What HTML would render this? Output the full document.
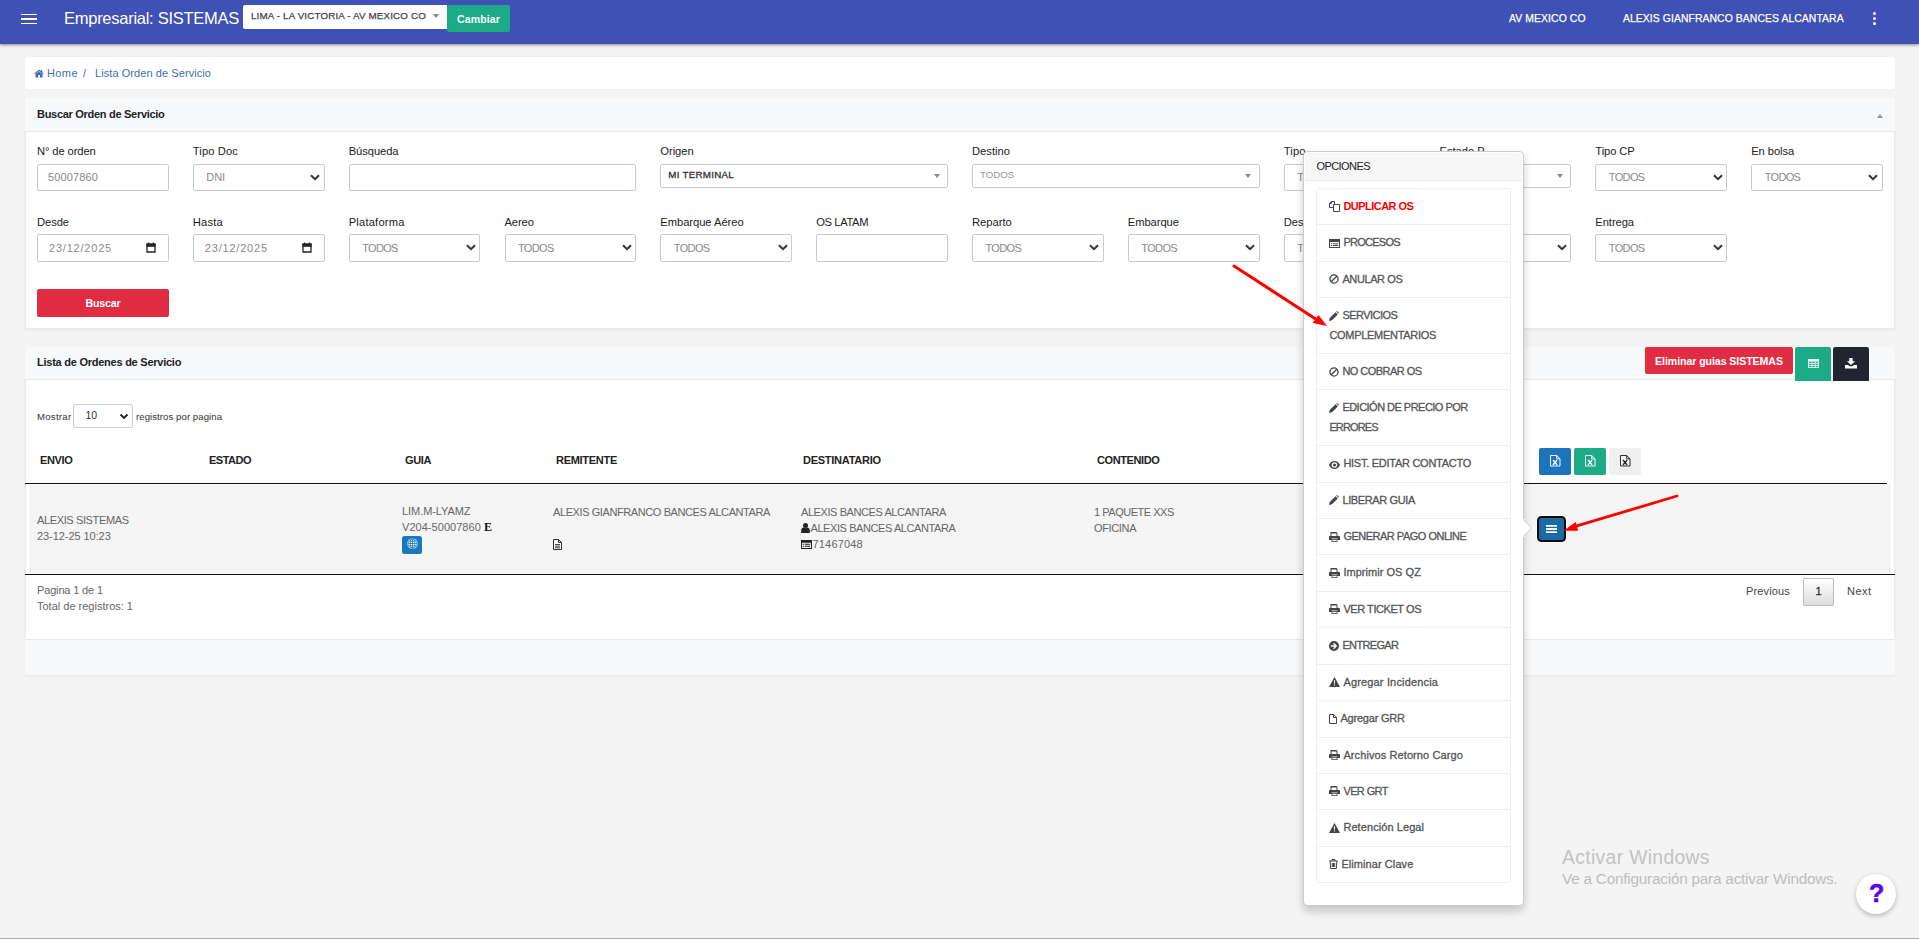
<!DOCTYPE html>
<html lang="es">
<head>
<meta charset="utf-8">
<title><span style="letter-spacing:0.075px">Lista Orden de Servicio</span></title>
<style>
*{box-sizing:border-box;margin:0;padding:0}
html,body{width:1919px;height:939px;overflow:hidden}
body{position:relative;background:#f4f4f4;font-family:"Liberation Sans",sans-serif;font-size:11px;color:#555;}
.abs{position:absolute}
/* NAVBAR */
.nav{position:absolute;left:0;top:0;width:1919px;height:43.5px;background:#3f51b5;box-shadow:0 1px 3px rgba(0,0,0,.45);z-index:5}
.burger{position:absolute;left:21px;top:14px;width:15px;height:10px}
.burger i{position:absolute;left:0;width:15.500px;height:1.200px;background:#fff}
.brand{position:absolute;left:64px;top:7px;font-size:16.5px;line-height:22px;color:#fff;white-space:nowrap}
.navsel{position:absolute;left:243px;top:5px;width:204px;height:24px;background:#fff;border-radius:2px 0 0 2px;font-size:9.8px;line-height:21px;color:#444;-webkit-text-stroke:.25px #444;padding-left:8px;white-space:nowrap}
.navsel b{position:absolute;right:8px;top:9px;border:3px solid transparent;border-top:4px solid #888;border-bottom:0;width:0;height:0}
.cambiar{position:absolute;left:447px;top:5px;width:63px;height:27px;background:#1cab86;border-radius:2px;color:#fff;font-weight:bold;font-size:10.5px;line-height:29px;text-align:center}
.navtxt{position:absolute;top:12px;font-size:10.4px;line-height:14px;color:#fff;white-space:nowrap;-webkit-text-stroke:.25px #fff}
.dots{position:absolute;left:1873px;top:12px;width:4px}
.dots i{display:block;width:3px;height:3px;border-radius:50%;background:#fff;margin-bottom:2px}
/* CARDS */
.crumb{position:absolute;left:25px;top:57px;width:1870px;height:32px;background:#fff;border-radius:3px;box-shadow:0 0 1px rgba(0,0,0,.12);font-size:11px;line-height:32px;color:#3d6fb0;white-space:nowrap}
.card{position:absolute;left:25px;width:1870px;background:#fff;outline:1px solid #e7ebf0;outline-offset:-1px;box-shadow:0 1px 2px rgba(0,0,0,.06)}
.card .hd{position:absolute;left:0;top:0;width:100%;background:#f8f9fb;border-bottom:1px solid #e6eaee;font-weight:bold;color:#222;font-size:11px}
.card .hd>span{position:absolute;left:12px;white-space:nowrap}
/* FORM */
.lbl{position:absolute;font-size:11.2px;line-height:14px;color:#222;white-space:nowrap}
.inp{position:absolute;width:131.83px;height:27px;background:#fff;border:1px solid #c3cbd6;border-radius:2px;font-size:11px;color:#8a8a8a;line-height:25px;padding-left:10px;white-space:nowrap}
.inp.r2{height:28px;line-height:26px}
.inp.r2 .chev{top:9px}
.sel{padding-left:12.500px}
.chev{position:absolute;right:3.500px;top:8.500px;width:10px;height:7px}
.s2{position:absolute;width:287.67px;height:24px;background:#fff;border:1px solid #c3cbd6;border-radius:2px;font-size:9.8px;line-height:20px;padding-left:7px;color:#999;white-space:nowrap}
.s2 b{position:absolute;right:7.300px;top:9.300px;border:3.200px solid transparent;border-top:4.400px solid #888;border-bottom:0;width:0;height:0}
.btn-buscar{position:absolute;left:12px;top:191px;width:131.83px;height:28px;background:#e02d44;border-radius:2px;color:#fff;font-weight:bold;font-size:10.6px;line-height:28px;text-align:center}

.date{padding-left:11px}
.cal{position:absolute;right:12px;top:7px;width:10px;height:11px}
/* LIST */
.btn{position:absolute;border-radius:2px;color:#fff;text-align:center;font-weight:bold;white-space:nowrap}
.tiny{font-size:9.6px;color:#333;white-space:nowrap;position:absolute;line-height:12px}
.th{position:absolute;top:107px;font-weight:bold;font-size:11px;line-height:13px;color:#222;white-space:nowrap}
.td{position:absolute;font-size:11px;line-height:16px;color:#666;white-space:nowrap}
.hline{position:absolute;left:0;height:1px;background:#111}
.pg{position:absolute;font-size:11px;line-height:14px;color:#444;white-space:nowrap}

/* POPOVER */
.pop{position:absolute;left:1303px;top:151px;width:221px;height:755px;background:#fff;border:1px solid rgba(0,0,0,.2);border-radius:5px;box-shadow:0 5px 10px rgba(0,0,0,.2);z-index:10}
.pop h3{margin:1px 1px 0 1px;height:28px;background:#f7f7f7;border-bottom:1px solid #ebebeb;border-radius:4px 4px 0 0;font-size:11px;font-weight:normal;line-height:27px;padding-left:11.500px;color:#222}
.lg{position:absolute;left:12.400px;top:36px;width:195px;border:1px solid #efefef;border-radius:3px}
.li{display:block;padding:8px 12px 8px 12px;line-height:19.400px;border-top:1px solid #eee;font-size:11px;color:#555;-webkit-text-stroke:.3px #555;width:193px}
.li:first-child{border-top:0}
.li svg{display:inline-block;vertical-align:-1.5px;margin-right:3px}
.poparrow{position:absolute;left:1523.300px;top:519px;width:9px;height:18px;z-index:11}
.wm{position:absolute;left:1562px;font-family:"Liberation Sans",sans-serif;color:#bdbdbd;white-space:nowrap}
.help{position:absolute;left:1856px;top:874px;width:40px;height:40px;padding-left:1.500px;border-radius:50%;background:#fff;box-shadow:0 2px 5px rgba(0,0,0,.25);color:#6200ee;font-weight:bold;font-size:25px;line-height:38px;text-align:center;-webkit-text-stroke:.6px #6200ee}
.bottomline{position:absolute;left:0;top:937px;width:1919px;height:2px;background:linear-gradient(#f8f8f8 50%,#a8adba 50%)}
.arrows{position:absolute;left:0;top:0;z-index:20;pointer-events:none}
.s2{letter-spacing:-0.118px}
.sel{letter-spacing:-0.655px}
</style>
</head>
<body>

<header class="nav">
  <div class="burger"><i style="top:0"></i><i style="top:4.4px"></i><i style="top:8.8px"></i></div>
  <div class="brand"><span style="letter-spacing:-0.267px">Empresarial: SISTEMAS</span></div>
  <div class="navsel"><span style="letter-spacing:0.149px">LIMA - LA VICTORIA - AV MEXICO CO</span><b></b></div>
  <div class="cambiar"><span style="letter-spacing:0.164px">Cambiar</span></div>
  <div class="navtxt" style="left:1509px"><span style="letter-spacing:0.095px">AV MEXICO CO</span></div>
  <div class="navtxt" style="left:1623px"><span style="letter-spacing:0.076px">ALEXIS GIANFRANCO BANCES ALCANTARA</span></div>
  <div class="dots"><i></i><i></i><i></i></div>
</header>

<nav class="crumb">
  <span class="abs" style="left:9px">
    <svg width="10" height="9" viewBox="0 0 20 18" style="vertical-align:-1px"><path fill="#3d6fb0" d="M10 1 L0.5 9 L2 10.5 L10 3.8 L18 10.5 L19.5 9 L16.5 6.4 V2 H14 V4.3 Z M3 10.6 V17 H8.2 V12 H11.8 V17 H17 V10.6 L10 4.8 Z"/></svg><span style="margin-left:3px"><span style="letter-spacing:0.385px">Home</span></span></span>
  <span class="abs" style="left:58px">/</span>
  <span class="abs" style="left:70px"><span style="letter-spacing:0.075px">Lista Orden de Servicio</span></span>
</nav>

<section class="card" id="search" style="top:98px;height:231px">
  <div class="hd" style="height:34px"><span style="top:9px;line-height:14px"><span style="letter-spacing:-0.291px">Buscar Orden de Servicio</span></span>
    <b class="abs" style="right:12px;top:16px;border:3.5px solid transparent;border-bottom:4px solid #999;border-top:0"></b></div>

  <div id="form">
    <div class="lbl" style="left:12px;top:46px"><span style="letter-spacing:-0.103px">N° de orden</span></div>
    <div class="lbl" style="left:167.83px;top:46px"><span style="letter-spacing:0.092px">Tipo Doc</span></div>
    <div class="lbl" style="left:323.67px;top:46px"><span style="letter-spacing:-0.070px">Búsqueda</span></div>
    <div class="lbl" style="left:635.33px;top:46px"><span style="letter-spacing:-0.059px">Origen</span></div>
    <div class="lbl" style="left:947px;top:46px"><span style="letter-spacing:0.027px">Destino</span></div>
    <div class="lbl" style="left:1258.67px;top:46px"><span style="letter-spacing:0.180px">Tipo</span></div>
    <div class="lbl" style="left:1414.5px;top:46px"><span style="letter-spacing:-0.035px">Estado P.</span></div>
    <div class="lbl" style="left:1570.33px;top:46px"><span style="letter-spacing:-0.100px">Tipo CP</span></div>
    <div class="lbl" style="left:1726.17px;top:46px"><span style="letter-spacing:-0.064px">En bolsa</span></div>

    <div class="inp" style="left:12px;top:66px"><span style="letter-spacing:0.150px">50007860</span></div>
    <div class="inp sel" style="left:167.83px;top:66px"><span style="letter-spacing:-0.127px">DNI</span><svg class="chev" viewBox="0 0 10 7"><path d="M1 1.200 L5 5.200 L9 1.200" fill="none" stroke="#333" stroke-width="2"/></svg></div>
    <div class="inp" style="left:323.67px;top:66px;width:287.67px"></div>
    <div class="s2" style="left:635.33px;top:66px;color:#333;-webkit-text-stroke:.3px #333"><span style="letter-spacing:0.253px">MI TERMINAL</span><b></b></div>
    <div class="s2" style="left:947px;top:66px">TODOS<b></b></div>
    <div class="inp sel" style="left:1258.67px;top:66px">TODOS</div>
    <div class="s2" style="left:1414.5px;top:66px;width:131.83px">TODOS<b></b></div>
    <div class="inp sel" style="left:1570.33px;top:66px">TODOS<svg class="chev" viewBox="0 0 10 7"><path d="M1 1.200 L5 5.200 L9 1.200" fill="none" stroke="#333" stroke-width="2"/></svg></div>
    <div class="inp sel" style="left:1726.17px;top:66px">TODOS<svg class="chev" viewBox="0 0 10 7"><path d="M1 1.200 L5 5.200 L9 1.200" fill="none" stroke="#333" stroke-width="2"/></svg></div>

    <div class="lbl" style="left:12px;top:117px"><span style="letter-spacing:-0.086px">Desde</span></div>
    <div class="lbl" style="left:167.83px;top:117px"><span style="letter-spacing:0.191px">Hasta</span></div>
    <div class="lbl" style="left:323.67px;top:117px"><span style="letter-spacing:0.188px">Plataforma</span></div>
    <div class="lbl" style="left:479.5px;top:117px"><span style="letter-spacing:-0.115px">Aereo</span></div>
    <div class="lbl" style="left:635.33px;top:117px"><span style="letter-spacing:-0.051px">Embarque Aéreo</span></div>
    <div class="lbl" style="left:791.17px;top:117px"><span style="letter-spacing:-0.360px">OS LATAM</span></div>
    <div class="lbl" style="left:947px;top:117px">Reparto</div>
    <div class="lbl" style="left:1102.83px;top:117px"><span style="letter-spacing:-0.075px">Embarque</span></div>
    <div class="lbl" style="left:1258.67px;top:117px"><span style="letter-spacing:-0.013px">Despacho</span></div>
    <div class="lbl" style="left:1414.5px;top:117px">Estado</div>
    <div class="lbl" style="left:1570.33px;top:117px"><span style="letter-spacing:-0.081px">Entrega</span></div>

    <div class="inp r2 date" style="left:12px;top:136px"><span style="letter-spacing:0.793px">23/12/2025</span><svg class="cal" viewBox="0 0 10 11"><path d="M1 2.2 H9 V10 H1 Z" fill="none" stroke="#222" stroke-width="1.3"/><path d="M1 2 H9 V4.2 H1 Z M2.6 0.4 V2 M7.4 0.4 V2" stroke="#222" stroke-width="1.2" fill="#222"/></svg></div>
    <div class="inp r2 date" style="left:167.83px;top:136px"><span style="letter-spacing:0.793px">23/12/2025</span><svg class="cal" viewBox="0 0 10 11"><path d="M1 2.2 H9 V10 H1 Z" fill="none" stroke="#222" stroke-width="1.3"/><path d="M1 2 H9 V4.2 H1 Z M2.6 0.4 V2 M7.4 0.4 V2" stroke="#222" stroke-width="1.2" fill="#222"/></svg></div>
    <div class="inp r2 sel" style="left:323.67px;top:136px">TODOS<svg class="chev" viewBox="0 0 10 7"><path d="M1 1.200 L5 5.200 L9 1.200" fill="none" stroke="#333" stroke-width="2"/></svg></div>
    <div class="inp r2 sel" style="left:479.5px;top:136px">TODOS<svg class="chev" viewBox="0 0 10 7"><path d="M1 1.200 L5 5.200 L9 1.200" fill="none" stroke="#333" stroke-width="2"/></svg></div>
    <div class="inp r2 sel" style="left:635.33px;top:136px">TODOS<svg class="chev" viewBox="0 0 10 7"><path d="M1 1.200 L5 5.200 L9 1.200" fill="none" stroke="#333" stroke-width="2"/></svg></div>
    <div class="inp r2" style="left:791.17px;top:136px"></div>
    <div class="inp r2 sel" style="left:947px;top:136px">TODOS<svg class="chev" viewBox="0 0 10 7"><path d="M1 1.200 L5 5.200 L9 1.200" fill="none" stroke="#333" stroke-width="2"/></svg></div>
    <div class="inp r2 sel" style="left:1102.83px;top:136px">TODOS<svg class="chev" viewBox="0 0 10 7"><path d="M1 1.200 L5 5.200 L9 1.200" fill="none" stroke="#333" stroke-width="2"/></svg></div>
    <div class="inp r2 sel" style="left:1258.67px;top:136px">TODOS<svg class="chev" viewBox="0 0 10 7"><path d="M1 1.200 L5 5.200 L9 1.200" fill="none" stroke="#333" stroke-width="2"/></svg></div>
    <div class="inp r2 sel" style="left:1414.5px;top:136px">TODOS<svg class="chev" viewBox="0 0 10 7"><path d="M1 1.200 L5 5.200 L9 1.200" fill="none" stroke="#333" stroke-width="2"/></svg></div>
    <div class="inp r2 sel" style="left:1570.33px;top:136px">TODOS<svg class="chev" viewBox="0 0 10 7"><path d="M1 1.200 L5 5.200 L9 1.200" fill="none" stroke="#333" stroke-width="2"/></svg></div>
    <div class="btn-buscar"><span style="letter-spacing:-0.164px">Buscar</span></div>
  </div>
</section>


<section class="card" id="list" style="top:347px;height:328px">
  <div class="hd" style="height:33px"><span style="top:8px;line-height:14px"><span style="letter-spacing:-0.245px">Lista de Ordenes de Servicio</span></span></div>
  <div class="btn" style="left:1620px;top:0;width:148px;height:27px;background:#e02d44;font-size:10.6px;line-height:28.500px"><span style="letter-spacing:-0.073px">Eliminar guias SISTEMAS</span></div>
  <div class="btn" style="left:1770px;top:0;width:36px;height:34px;background:#1cab86;border-radius:2px 2px 0 0">
    <svg class="abs" style="left:12.500px;top:12px" width="11" height="9" viewBox="0 0 10 9" preserveAspectRatio="none"><path fill="#fff" d="M0 0h10v9H0z"/><path fill="#1cab86" d="M1 2.6h2.2v1.4H1zM3.9 2.6h2.2v1.4H3.9zM6.8 2.6h2.2v1.4H6.8zM1 4.7h2.2v1.4H1zM3.9 4.7h2.2v1.4H3.9zM6.8 4.7h2.2v1.4H6.8zM1 6.8h2.2v1.4H1zM3.9 6.8h2.2v1.4H3.9zM6.8 6.8h2.2v1.4H6.8z"/></svg></div>
  <div class="btn" style="left:1808px;top:0;width:36px;height:34px;background:#22242f;border-radius:2px 2px 0 0">
    <svg class="abs" style="left:12px;top:11px" width="12" height="10.500" viewBox="0 0 10 10" preserveAspectRatio="none"><path fill="#fff" d="M3.6 0h2.8v3.2h2.1L5 6.6 1.5 3.200h2.1zM0 6.600h2.600l1.400 1.300h2l1.400-1.300H10V10H0z"/></svg></div>

  <div class="tiny" style="left:12px;top:64px"><span style="letter-spacing:0.264px">Mostrar</span></div>
  <div class="abs" style="left:48px;top:57px;width:59.500px;height:23.500px;border:1px solid #ccc;border-radius:2px;background:#fff;font-size:10.500px;line-height:21px;color:#333;padding-left:11.500px">10<svg class="chev" style="top:7.500px;right:3px" viewBox="0 0 9 7"><path d="M1 1.5 L4.5 5 L8 1.500" fill="none" stroke="#222" stroke-width="1.8"/></svg></div>
  <div class="tiny" style="left:111px;top:64px"><span style="letter-spacing:0.063px">registros por pagina</span></div>

  <div class="th" style="left:15px"><span style="letter-spacing:-0.359px">ENVIO</span></div>
  <div class="th" style="left:184px"><span style="letter-spacing:-0.486px">ESTADO</span></div>
  <div class="th" style="left:380px"><span style="letter-spacing:-0.367px">GUIA</span></div>
  <div class="th" style="left:531px"><span style="letter-spacing:-0.283px">REMITENTE</span></div>
  <div class="th" style="left:778px"><span style="letter-spacing:-0.261px">DESTINATARIO</span></div>
  <div class="th" style="left:1072px"><span style="letter-spacing:-0.400px">CONTENIDO</span></div>

  <div class="btn" style="left:1514px;top:101px;width:32px;height:27px;background:#1b75bb"><svg class="abs" style="left:11px;top:7.300px" width="10.500" height="11.500" viewBox="0 0 11 12"><path fill="none" stroke="#fff" stroke-width="1" d="M0.500 0.500h6.500l3.500 3.500v7.500h-10zM7 0.500v3.500h3.500"/><path stroke="#fff" stroke-width="1.500" d="M3.200 5.300l4.200 5M7.400 5.300l-4.200 5"/></svg></div>
  <div class="btn" style="left:1549px;top:101px;width:32px;height:27px;background:#1cab86"><svg class="abs" style="left:11px;top:7.300px" width="10.500" height="11.500" viewBox="0 0 11 12"><path fill="none" stroke="#fff" stroke-width="1" d="M0.500 0.500h6.500l3.500 3.500v7.500h-10zM7 0.500v3.500h3.500"/><path stroke="#fff" stroke-width="1.500" d="M3.200 5.300l4.200 5M7.400 5.300l-4.200 5"/></svg></div>
  <div class="btn" style="left:1584px;top:101px;width:32px;height:27px;background:#f0f0f0"><svg class="abs" style="left:11px;top:7.300px" width="10.500" height="11.500" viewBox="0 0 11 12"><path fill="none" stroke="#222" stroke-width="1" d="M0.500 0.500h6.500l3.500 3.500v7.500h-10zM7 0.500v3.500h3.500"/><path stroke="#222" stroke-width="1.500" d="M3.200 5.300l4.200 5M7.400 5.300l-4.200 5"/></svg></div>

  <div class="hline" style="top:136px;width:1862px"></div>
  <div class="abs" style="left:4px;top:137px;width:1862px;height:90px;background:#f5f5f5"></div>
  <div class="hline" style="top:227px;width:1870px"></div>

  <div class="td" style="left:12px;top:165px"><span style="letter-spacing:-0.372px">ALEXIS SISTEMAS</span><br><span style="letter-spacing:-0.063px">23-12-25 10:23</span></div>
  <div class="td" style="left:377px;top:156px"><span style="letter-spacing:-0.067px">LIM.M-LYAMZ</span><br><span style="letter-spacing:0.042px">V204-50007860</span> <b style="font-family:'Liberation Serif',serif;color:#111;font-size:12px">E</b></div>
  <div class="btn" style="left:377px;top:189px;width:20px;height:18px;background:#1779ba;border-radius:2.500px"><svg class="abs" style="left:5px;top:2px" width="11" height="11" viewBox="0 0 11 11"><circle cx="5.500" cy="5.500" r="5.300" fill="#fff"/><g fill="none" stroke="#1b75bb" stroke-width=".8"><ellipse cx="5.500" cy="5.500" rx="2.300" ry="4.600"/><path d="M5.500 0.900v9.200M0.900 5.500h9.200M1.600 3.200h7.800M1.600 7.800h7.800"/><circle cx="5.500" cy="5.500" r="4.600"/></g></svg></div>
  <div class="td" style="left:528px;top:157px"><span style="letter-spacing:-0.408px">ALEXIS GIANFRANCO BANCES ALCANTARA</span></div>
  <svg class="abs" style="left:528px;top:192px" width="9" height="11" viewBox="0 0 9 11"><path fill="none" stroke="#333" stroke-width="1" d="M0.500 0.500h5l3 3v7h-8zM5.500 0.500v3h3"/><path stroke="#333" stroke-width=".9" d="M2 5.500h5M2 7.200h5M2 8.800h5"/></svg>
  <div class="td" style="left:776px;top:157px"><span style="letter-spacing:-0.417px">ALEXIS BANCES ALCANTARA</span><br><svg width="9" height="10" viewBox="0 0 9 10" style="vertical-align:-1px;margin-right:.5px"><circle cx="4.500" cy="2.600" r="2.500" fill="#222"/><path fill="#222" d="M0.200 10V7.200C0.200 5.600 1.500 4.700 2.700 4.600 3.200 5.100 3.800 5.300 4.500 5.300S5.800 5.100 6.300 4.600C7.500 4.700 8.800 5.600 8.800 7.200V10z"/></svg><span><span style="letter-spacing:-0.417px">ALEXIS BANCES ALCANTARA</span></span><br><svg width="11" height="9" viewBox="0 0 11 9" style="vertical-align:-1px;margin-right:.5px"><path fill="#222" d="M0 0h11v9H0zM1 2.800V8h9V2.800z"/><path fill="#222" d="M1.800 3.800h1.400v1H1.800zM4 3.800h5.200v1H4zM1.800 5.800h1.400v1H1.800zM4 5.800h5.200v1H4z"/></svg><span><span style="letter-spacing:0.178px">71467048</span></span></div>
  <div class="td" style="left:1069px;top:157px"><span style="letter-spacing:-0.475px">1 PAQUETE XXS</span><br><span style="letter-spacing:-0.354px">OFICINA</span></div>

  <div class="btn" style="left:1512px;top:169px;width:29px;height:26px;background:#1a6aa3;border:2px solid #0a0a0a;border-radius:4.500px;box-shadow:0 0 0 1px rgba(255,255,255,.85)"><svg class="abs" style="left:7px;top:7px" width="11" height="8" viewBox="0 0 11 8"><path fill="#fff" d="M0 0h11v1.800H0zM0 3.100h11v1.800H0zM0 6.200h11V8H0z"/></svg></div>

  <div class="td" style="left:12px;top:235px"><span style="letter-spacing:-0.158px">Pagina 1 de 1</span><br>Total de registros: 1</div>
  <div class="pg" style="left:1721px;top:237px"><span style="letter-spacing:0.143px">Previous</span></div>
  <div class="abs" style="left:1778px;top:231px;width:31px;height:28px;border:1px solid #bdbdbd;border-radius:1px;background:linear-gradient(#fff,#dcdcdc);font-size:11px;line-height:25px;text-align:center;color:#333;-webkit-text-stroke:.3px #333">1</div>
  <div class="pg" style="left:1822px;top:237px"><span style="letter-spacing:0.458px">Next</span></div>

  <div class="abs" style="left:0;top:292px;width:1870px;height:36px;background:#f8f9fb;border-top:1px solid #e6eaee"></div>
</section>

<div class="pop">
  <h3><span style="letter-spacing:-0.583px">OPCIONES</span></h3>
  <div class="lg">
    <div class="li" style="color:#ff0000;font-weight:bold;-webkit-text-stroke:0"><svg width="11" height="11" viewBox="0 0 11 11"><path fill="none" stroke="#444" stroke-width="1" d="M4.5 3.5h6v7h-6zM4.500 6.500h-4v-4l2-2h3v3M0.500 2.500h2v-2"/></svg><span style="letter-spacing:-0.528px">DUPLICAR OS</span></div>
    <div class="li"><svg width="11" height="9" viewBox="0 0 11 9"><path fill="#444" d="M0 0h11v9H0zM1 3v5h9V3z"/><path fill="#444" d="M1.800 4.200h1.400v1H1.800zM4 4.200h5.200v1H4zM1.800 6h1.400v1H1.800zM4 6h5.200v1H4z"/></svg><span style="letter-spacing:-0.737px">PROCESOS</span></div>
    <div class="li"><svg width="10" height="10" viewBox="0 0 10 10"><circle cx="5" cy="5" r="4.100" fill="none" stroke="#444" stroke-width="1.300"/><path d="M2.200 7.800L7.800 2.200" stroke="#444" stroke-width="1.300"/></svg><span style="letter-spacing:-0.397px">ANULAR OS</span></div>
    <div class="li"><svg width="10" height="10" viewBox="0 0 10 10"><path fill="#444" d="M0 10l0.700-2.900L6.600 1.200l2.200 2.200L2.900 9.300zM7.200 0.600l0.900-0.600 1.900 1.900-0.600 0.900z"/></svg><span style="letter-spacing:-0.527px">SERVICIOS</span><br><span style="letter-spacing:-0.288px">COMPLEMENTARIOS</span></div>
    <div class="li"><svg width="10" height="10" viewBox="0 0 10 10"><circle cx="5" cy="5" r="4.100" fill="none" stroke="#444" stroke-width="1.300"/><path d="M2.200 7.800L7.800 2.200" stroke="#444" stroke-width="1.300"/></svg><span style="letter-spacing:-0.543px">NO COBRAR OS</span></div>
    <div class="li"><svg width="10" height="10" viewBox="0 0 10 10"><path fill="#444" d="M0 10l0.700-2.900L6.600 1.200l2.200 2.200L2.900 9.300zM7.200 0.600l0.900-0.600 1.900 1.900-0.600 0.900z"/></svg><span style="letter-spacing:-0.525px">EDICIÓN DE PRECIO POR</span><br><span style="letter-spacing:-0.884px">ERRORES</span></div>
    <div class="li"><svg width="11" height="8" viewBox="0 0 11 8"><path fill="#444" d="M5.500 0C2.800 0 0.800 2 0 4c0.800 2 2.800 4 5.500 4S10.200 6 11 4C10.200 2 8.200 0 5.500 0zm0 6.800a2.800 2.800 0 110-5.600 2.800 2.800 0 010 5.600z"/><circle cx="5.500" cy="4" r="1.500" fill="#444"/></svg><span style="letter-spacing:-0.267px">HIST. EDITAR CONTACTO</span></div>
    <div class="li"><svg width="10" height="10" viewBox="0 0 10 10"><path fill="#444" d="M0 10l0.700-2.900L6.600 1.200l2.200 2.200L2.900 9.300zM7.200 0.600l0.900-0.600 1.900 1.900-0.600 0.900z"/></svg><span style="letter-spacing:-0.366px">LIBERAR GUIA</span></div>
    <div class="li"><svg width="11" height="10" viewBox="0 0 11 10"><path fill="#444" d="M2.500 0h5l1 1v3h-1V1.500h-5V4h-1V0zM0.800 4h9.400a.8.800 0 01.8.800V8H8.500V6.500h-6V8H0V4.800A.8.800 0 01.8 4zM2.500 7h6v3h-6zM3.300 7.800v1.400h4.400V7.800z"/></svg><span style="letter-spacing:-0.497px">GENERAR PAGO ONLINE</span></div>
    <div class="li"><svg width="11" height="10" viewBox="0 0 11 10"><path fill="#444" d="M2.500 0h5l1 1v3h-1V1.500h-5V4h-1V0zM0.800 4h9.400a.8.800 0 01.8.800V8H8.500V6.500h-6V8H0V4.800A.8.800 0 01.8 4zM2.500 7h6v3h-6zM3.300 7.800v1.400h4.400V7.800z"/></svg><span style="letter-spacing:0.038px">Imprimir OS QZ</span></div>
    <div class="li"><svg width="11" height="10" viewBox="0 0 11 10"><path fill="#444" d="M2.500 0h5l1 1v3h-1V1.500h-5V4h-1V0zM0.800 4h9.400a.8.800 0 01.8.800V8H8.500V6.500h-6V8H0V4.800A.8.800 0 01.8 4zM2.500 7h6v3h-6zM3.300 7.800v1.400h4.400V7.800z"/></svg><span style="letter-spacing:-0.437px">VER TICKET OS</span></div>
    <div class="li"><svg width="10" height="10" viewBox="0 0 10 10"><circle cx="5" cy="5" r="5" fill="#444"/><path fill="#fff" d="M5 1.800L8.200 5 5 8.200 4 7.200l1.500-1.500H1.800V4.300h3.700L4 2.800z"/></svg><span style="letter-spacing:-0.646px">ENTREGAR</span></div>
    <div class="li"><svg width="11" height="10" viewBox="0 0 11 10"><path fill="#444" d="M5.500 0L11 10H0z"/><path fill="#fff" d="M4.900 3.300h1.200l-.2 3.400h-.8zM4.900 7.400h1.200v1.100H4.900z"/></svg><span style="letter-spacing:0.163px">Agregar Incidencia</span></div>
    <div class="li"><svg width="8" height="10" viewBox="0 0 8 10"><path fill="none" stroke="#444" stroke-width="1" d="M0.500 0.500h4.200l2.800 2.800v6.200h-7zM4.500 0.500v3h3"/></svg><span style="letter-spacing:-0.204px">Agregar GRR</span></div>
    <div class="li"><svg width="11" height="10" viewBox="0 0 11 10"><path fill="#444" d="M2.500 0h5l1 1v3h-1V1.500h-5V4h-1V0zM0.800 4h9.400a.8.800 0 01.8.800V8H8.500V6.500h-6V8H0V4.800A.8.800 0 01.8 4zM2.500 7h6v3h-6zM3.300 7.800v1.400h4.400V7.800z"/></svg><span style="letter-spacing:0.096px">Archivos Retorno Cargo</span></div>
    <div class="li"><svg width="11" height="10" viewBox="0 0 11 10"><path fill="#444" d="M2.500 0h5l1 1v3h-1V1.500h-5V4h-1V0zM0.800 4h9.400a.8.800 0 01.8.800V8H8.500V6.500h-6V8H0V4.800A.8.800 0 01.8 4zM2.500 7h6v3h-6zM3.300 7.800v1.400h4.400V7.800z"/></svg><span style="letter-spacing:-0.601px">VER GRT</span></div>
    <div class="li"><svg width="11" height="10" viewBox="0 0 11 10"><path fill="#444" d="M5.500 0L11 10H0z"/><path fill="#fff" d="M4.900 3.300h1.200l-.2 3.400h-.8zM4.900 7.400h1.200v1.100H4.900z"/></svg><span style="letter-spacing:0.077px">Retención Legal</span></div>
    <div class="li"><svg width="9" height="10" viewBox="0 0 9 10"><path fill="none" stroke="#444" stroke-width="1" d="M0 2h9M3 2V0.500h3V2M1.200 2.300l.4 7.200h5.800l.4-7.200M3.300 4v4M4.500 4v4M5.700 4v4"/></svg><span style="letter-spacing:0.075px">Eliminar Clave</span></div>
  </div>
</div>
<svg class="poparrow" viewBox="0 0 9 18"><path d="M0 0 L8.500 9 L0 18 Z" fill="#fff" stroke="rgba(0,0,0,.18)" stroke-width="1"/><path d="M0 0v18" stroke="#fff" stroke-width="2"/></svg>
<svg class="arrows" width="1919" height="939" viewBox="0 0 1919 939">
  <path d="M1234 266 L1318 320.500" stroke="#ff0000" stroke-width="3" stroke-linecap="round" fill="none"/>
  <path d="M1327 326 L1312.500 323 L1318.500 315 Z" fill="#ff0000"/>
  <path d="M1677 496 L1576 526.200" stroke="#ff0000" stroke-width="2.800" stroke-linecap="round" fill="none"/>
  <path d="M1563.300 530.700 L1575.700 522 L1578.200 530.700 Z" fill="#ff0000"/>
</svg>
<div class="wm" style="top:846.500px;font-size:19.300px;line-height:22px;color:#c2c2c2"><span style="letter-spacing:0.356px">Activar Windows</span></div>
<div class="wm" style="top:869.500px;font-size:15.300px;line-height:18px"><span style="letter-spacing:-0.210px">Ve a Configuración para activar Windows.</span></div>
<div class="help">?</div>
<div class="bottomline"></div>

</body>
</html>
